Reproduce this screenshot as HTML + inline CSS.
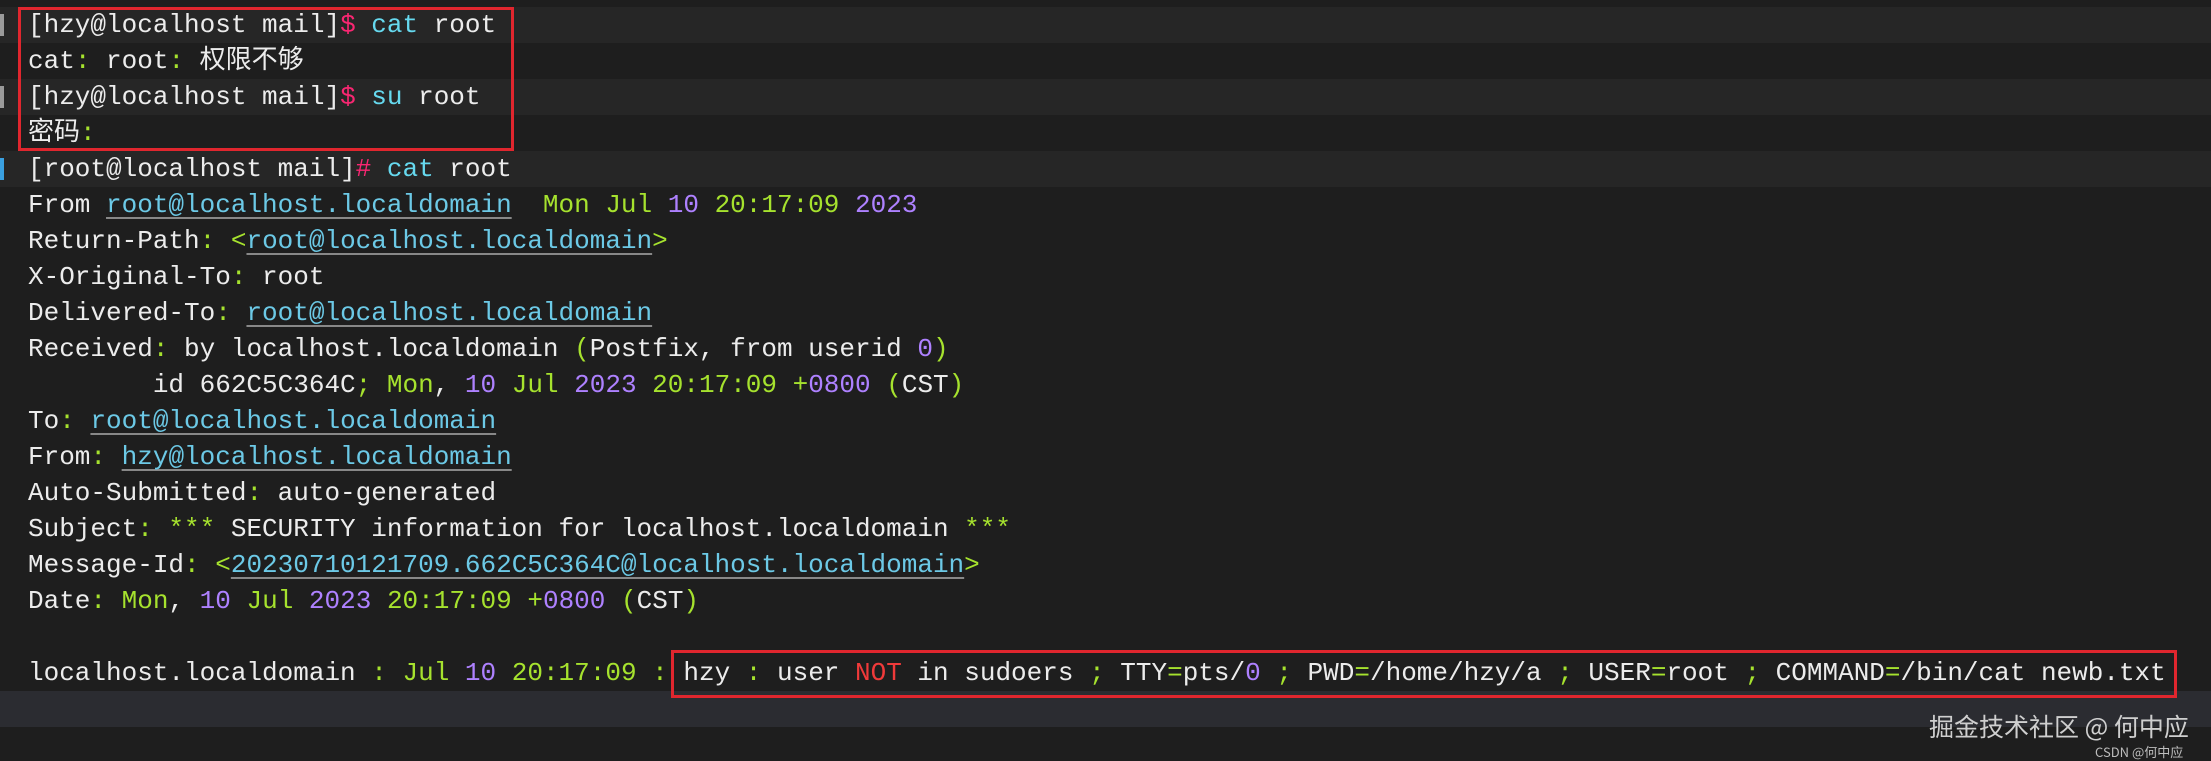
<!DOCTYPE html>
<html><head><meta charset="utf-8"><style>
html,body{margin:0;padding:0;}
body{width:2211px;height:761px;background:#1e1e1e;position:relative;overflow:hidden;font-family:"Liberation Mono","Noto Sans CJK SC",monospace;font-size:26px;color:#ececec;}
.l{position:absolute;left:0;width:2211px;height:36px;line-height:36px;white-space:pre;padding-left:28px;box-sizing:border-box;}
.hl{background:#262626;}
.g{color:#a6e22e}.c{color:#66d9ef}.p{color:#f92672}.v{color:#ae81ff}.r{color:#f03a3a}
.u{color:#6cc9e6;text-decoration:underline;text-decoration-color:#888;text-underline-offset:5px;}
.box{position:absolute;border:3px solid #e0262e;box-sizing:border-box;}
.mk{position:absolute;left:0;width:4px;height:22px;background:#9a9a9a;}
</style></head><body>
<div class="l hl" style="top:7px">[hzy@localhost mail]<span class="p">$</span> <span class="c">cat</span> root</div>
<div class="l" style="top:43px">cat<span class="g">:</span> root<span class="g">:</span> 权限不够</div>
<div class="l hl" style="top:79px">[hzy@localhost mail]<span class="p">$</span> <span class="c">su</span> root</div>
<div class="l" style="top:115px">密码<span class="g">:</span></div>
<div class="l hl" style="top:151px">[root@localhost mail]<span class="p">#</span> <span class="c">cat</span> root</div>
<div class="l" style="top:187px">From <span class="u">root@localhost.localdomain</span>  <span class="g">Mon Jul</span> <span class="v">10</span> <span class="g">20:17:09</span> <span class="v">2023</span></div>
<div class="l" style="top:223px">Return-Path<span class="g">:</span> <span class="g">&lt;</span><span class="u">root@localhost.localdomain</span><span class="g">&gt;</span></div>
<div class="l" style="top:259px">X-Original-To<span class="g">:</span> root</div>
<div class="l" style="top:295px">Delivered-To<span class="g">:</span> <span class="u">root@localhost.localdomain</span></div>
<div class="l" style="top:331px">Received<span class="g">:</span> by localhost.localdomain <span class="g">(</span>Postfix, from userid <span class="v">0</span><span class="g">)</span></div>
<div class="l" style="top:367px">        id 662C5C364C<span class="g">; Mon</span>, <span class="v">10</span> <span class="g">Jul</span> <span class="v">2023</span> <span class="g">20:17:09 +</span><span class="v">0800</span> <span class="g">(</span>CST<span class="g">)</span></div>
<div class="l" style="top:403px">To<span class="g">:</span> <span class="u">root@localhost.localdomain</span></div>
<div class="l" style="top:439px">From<span class="g">:</span> <span class="u">hzy@localhost.localdomain</span></div>
<div class="l" style="top:475px">Auto-Submitted<span class="g">:</span> auto-generated</div>
<div class="l" style="top:511px">Subject<span class="g">: ***</span> SECURITY information for localhost.localdomain <span class="g">***</span></div>
<div class="l" style="top:547px">Message-Id<span class="g">: &lt;</span><span class="u">20230710121709.662C5C364C@localhost.localdomain</span><span class="g">&gt;</span></div>
<div class="l" style="top:583px">Date<span class="g">: Mon</span>, <span class="v">10</span> <span class="g">Jul</span> <span class="v">2023</span> <span class="g">20:17:09 +</span><span class="v">0800</span> <span class="g">(</span>CST<span class="g">)</span></div>
<div class="l" style="top:655px">localhost.localdomain <span class="g">:</span> <span class="g">Jul</span> <span class="v">10</span> <span class="g">20:17:09 :</span> hzy <span class="g">:</span> user <span class="r">NOT</span> in sudoers <span class="g">;</span> TTY<span class="g">=</span>pts/<span class="v">0</span> <span class="g">;</span> PWD<span class="g">=</span>/home/hzy/a <span class="g">;</span> USER<span class="g">=</span>root <span class="g">;</span> COMMAND<span class="g">=</span>/bin/cat newb.txt</div>
<div class="l" style="top:691px;background:#2b2c31"></div>
<div class="mk" style="top:14px"></div>
<div class="mk" style="top:86px"></div>
<div class="mk" style="top:158px;background:#3aa0e0"></div>
<div class="box" style="left:18px;top:7px;width:496px;height:144px"></div>
<div class="box" style="left:671px;top:650px;width:1506px;height:48px"></div>
<div style="position:absolute;left:1929px;top:708px;font-family:'Noto Sans CJK SC',sans-serif;font-size:25px;color:#cfcfcf;white-space:nowrap">掘金技术社区 @ 何中应</div>
<div style="position:absolute;left:2095px;top:742px;font-family:'Noto Sans CJK SC',sans-serif;font-size:13px;color:#bdbdbd;white-space:nowrap">CSDN @何中应</div>
</body></html>
